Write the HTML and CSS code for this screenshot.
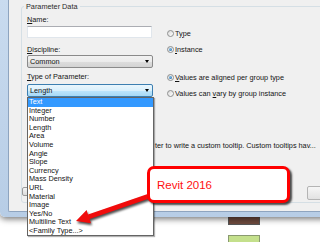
FILE: index.html
```html
<!DOCTYPE html>
<html lang="en">
<head>
    <meta charset="UTF-8">
    <meta name="viewport" content="width=device-width, initial-scale=1.0">
    <title>Parameter Properties</title>
    <link rel="stylesheet" href="styles.css">
</head>
<body>
<div class="screen">
    <div class="frame">
        <div class="dialog">
            <fieldset class="group">
                <legend>Parameter Data</legend>
                <div class="cols">
                    <div class="left">
                        <label class="lbl lbl-name"><u>N</u>ame:</label>
                        <div class="input"></div>
                        <label class="lbl lbl-disc"><u>D</u>iscipline:</label>
                        <div class="combo">Common<span class="caret"></span></div>
                        <label class="lbl lbl-type"><u>T</u>ype of Parameter:</label>
                        <div class="combo-wrap">
                            <div class="combo hot">Length<span class="caret"></span></div>
                            <ul class="droplist">
                                <li class="sel">Text</li>
                                <li>Integer</li>
                                <li>Number</li>
                                <li>Length</li>
                                <li>Area</li>
                                <li>Volume</li>
                                <li>Angle</li>
                                <li>Slope</li>
                                <li>Currency</li>
                                <li>Mass Density</li>
                                <li>URL</li>
                                <li>Material</li>
                                <li>Image</li>
                                <li>Yes/No</li>
                                <li>Multiline Text</li>
                                <li>&lt;Family Type...&gt;</li>
                            </ul>
                        </div>
                    </div>
                    <div class="right">
                        <div class="radio-row first"><span class="radio"></span><span>T<u>y</u>pe</span></div>
                        <div class="radio-row"><span class="radio on"></span><span><u>I</u>nstance</span></div>
                        <div class="radio-row spaced"><span class="radio on"></span><span><u>V</u>alues are aligned per group type</span></div>
                        <div class="radio-row"><span class="radio"></span><span>Values can <u>v</u>ary by group instance</span></div>
                    </div>
                </div>
                <div class="tip">ter to write a custom tooltip. Custom tooltips hav...</div>
                <div class="actions">
                    <div class="edit-btn"></div>
                    <div class="ok-btn"></div>
                </div>
            </fieldset>
        </div>
    </div>
    <div class="swatches">
        <div class="swatch brown"></div>
        <div class="swatch green"></div>
    </div>

    <svg class="arrow" width="320" height="242" viewBox="0 0 320 242">
        <polygon points="76,221 91,223.3 89.6,219 155.8,196.3 154.2,191.7 88,214.4 86.6,210.1"/>
    </svg>
    <div class="callout">Revit 2016</div>
</div>
</body>
</html>
```

FILE: styles.css
```css
* {
    box-sizing: border-box;
}
html, body {
    margin: 0;
    overflow: hidden;
}
body {
    background-color: #ffffff;
    font-family: "Liberation Sans", Arial, sans-serif;
    font-size: 7.3px;
    color: #141414;
}
.screen {
    position: relative;
    width: 320px;
    height: 242px;
    overflow: hidden;
}
.frame {
    position: relative;
    z-index: 1;
    width: 340px;
    height: 217px;
    padding: 0 0 5px 8px;
    background: linear-gradient(#c9dbef, #b7cde6);
    border-radius: 0 0 0 5px;
    box-shadow: 0 2px 6px rgba(0, 0, 0, 0.55);
}
.dialog {
    height: 212px;
    padding: 2px 0 0 12px;
    background-color: #f0f0f0;
    border-left: 1px solid #8ea4bf;
    border-bottom: 1px solid #8ea4bf;
    border-radius: 0 0 0 2px;
}
.group {
    width: 330px;
    height: 201px;
    margin: 0;
    padding: 0 0 0 5px;
    border: 1px solid #d5dfe5;
    border-radius: 3px;
}
.group legend {
    margin-left: -3px;
    padding: 0 2px;
    line-height: 9px;
    color: #2a2a2a;
}
.cols {
    display: flex;
}
.left {
    width: 126px;
}
.lbl {
    display: block;
    line-height: 9px;
}
.lbl-name {
    margin-top: 4px;
}
.lbl-disc {
    margin-top: 7px;
}
.lbl-type {
    margin-top: 4px;
}
.input {
    width: 125px;
    height: 12px;
    margin-top: 2px;
    background-color: #ffffff;
    border: 1px solid #e0e6ec;
    border-top-color: #abadb3;
}
.combo {
    display: flex;
    align-items: center;
    height: 13px;
    margin-top: 1px;
    padding-left: 2px;
    background: linear-gradient(#f2f2f2, #ebebeb 50%, #dddddd 51%, #d3d3d3);
    border: 1px solid #8a8a8a;
    border-radius: 2px;
}
.combo-wrap {
    position: relative;
    margin-top: 3px;
}
.combo.hot {
    margin-top: 0;
    background: linear-gradient(#eaf6fd, #d9f0fc 50%, #bee6fd 51%, #a7d9f5);
    border-color: #3c7fb1;
}
.caret {
    margin-left: auto;
    margin-right: 3px;
    border-top: 3px solid #000000;
    border-left: 2.5px solid transparent;
    border-right: 2.5px solid transparent;
}
.droplist {
    position: absolute;
    top: 100%;
    left: 0;
    z-index: 2;
    width: 127px;
    height: 139px;
    margin: 0;
    padding: 0;
    list-style: none;
    background-color: #ffffff;
    border: 1px solid #646464;
    box-shadow: 1px 1px 1px rgba(0, 0, 0, 0.3);
}
.droplist li {
    height: 8.6px;
    line-height: 8.6px;
    padding-left: 1px;
    white-space: nowrap;
}
.droplist li.sel {
    background-color: #3399ff;
    color: #ffffff;
}
.right {
    margin-left: 14px;
}
.radio-row {
    display: flex;
    align-items: center;
    gap: 1px;
    height: 16px;
    white-space: nowrap;
}
.radio-row.first {
    margin-top: 14px;
}
.radio-row.spaced {
    margin-top: 12px;
}
.radio {
    position: relative;
    width: 7px;
    height: 7px;
    border: 1px solid #8e8f8f;
    border-radius: 50%;
    background: linear-gradient(135deg, #d8d8d8, #ffffff);
}
.radio.on::after {
    content: "";
    position: absolute;
    left: 1px;
    top: 1px;
    width: 3px;
    height: 3px;
    border-radius: 50%;
    background: radial-gradient(circle at 35% 35%, #7fc3f0, #1b5d9c);
}
.tip {
    margin: 40px 0 0 128px;
    line-height: 9px;
    white-space: nowrap;
}
.actions {
    display: flex;
    justify-content: space-between;
    align-items: flex-start;
    margin-top: 36px;
    margin-left: -5px;
}
.edit-btn {
    width: 7px;
    height: 9px;
    margin-top: 1px;
    background: linear-gradient(#f4f4f4, #dcdcdc);
    border: 1px solid #9a9a9a;
    border-radius: 2px;
}
.ok-btn {
    width: 40px;
    height: 14px;
    margin-right: 3px;
    background: linear-gradient(#f6f6f6, #e2e2e2);
    border: 1px solid #b4b4b4;
    border-radius: 2px;
}
.swatches {
    display: flex;
    flex-direction: column;
    gap: 10px;
    width: 32px;
    margin: -2px 0 0 228px;
}
.swatch {
    height: 10px;
    border: 1px solid #555555;
}
.swatch.brown {
    background-color: #6e4a3e;
}
.swatch.green {
    background-color: #c4e08c;
    border-color: #8a9a70;
}
.arrow {
    position: absolute;
    left: 0;
    top: 0;
    z-index: 3;
    fill: #f00c0c;
    filter: drop-shadow(1px 2px 1px rgba(0, 0, 0, 0.7));
}
.callout {
    position: absolute;
    left: 147px;
    top: 166px;
    z-index: 4;
    display: flex;
    align-items: center;
    width: 143px;
    height: 37px;
    padding-left: 7px;
    background-color: #ffffff;
    border: 3px solid #ff0000;
    border-radius: 7px;
    box-shadow: 2px 2px 2px rgba(0, 0, 0, 0.7);
    color: #ff1010;
    font-size: 11.5px;
}
```
